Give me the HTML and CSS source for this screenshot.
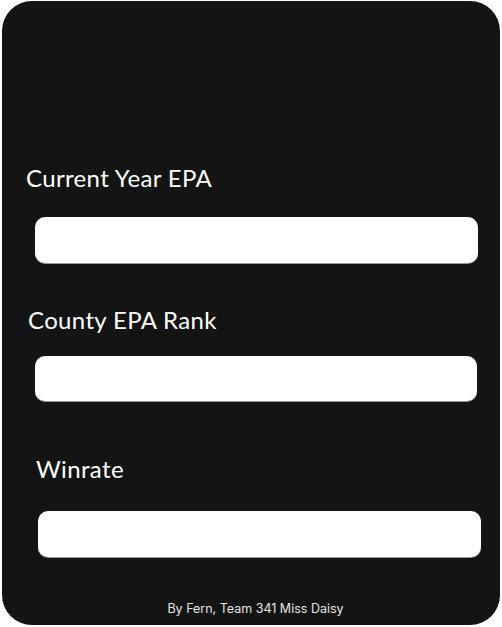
FILE: index.html
```html
<!DOCTYPE html>
<html>
<head>
<meta charset="utf-8">
<link rel="stylesheet" href="styles.css">
</head>
<body>
<div class="card">
  <label class="label label-1" for="epa">Current Year EPA</label>
  <input class="field field-1" id="epa" type="text">
  <label class="label label-2" for="rank">County EPA Rank</label>
  <input class="field field-2" id="rank" type="text">
  <label class="label label-3" for="winrate">Winrate</label>
  <input class="field field-3" id="winrate" type="text">
  <div class="footer">By Fern, Team 341 Miss Daisy</div>
</div>
</body>
</html>
```
FILE: styles.css
```css
html, body {
  margin: 0;
  padding: 0;
  background: #ffffff;
}
.card {
  box-sizing: border-box;
  margin: 1px 0 0 2px;
  width: 498px;
  height: 624px;
  background: #141414;
  border-radius: 30px;
  display: flex;
  flex-direction: column;
  align-items: flex-start;
  padding-top: 162px;
}
.label {
  display: block;
  font-family: Lato, "Liberation Sans", sans-serif;
  font-size: 24px;
  line-height: 30px;
  letter-spacing: 0.35px;
  color: #ffffff;
}
.label-1 { margin-left: 24px; }
.label-2 { margin-left: 26px; margin-top: 42px; }
.label-3 { margin-left: 34px; margin-top: 53px; }
.field {
  box-sizing: border-box;
  display: block;
  border: none;
  outline: none;
  background: #ffffff;
  border-radius: 10px;
  height: 46px;
  width: 443px;
  box-shadow: 0 1px 0 #9a9a9a;
  padding: 0;
}
.field-1 { margin: 24px 0 0 33px; }
.field-2 { margin: 21px 0 0 33px; height: 45px; width: 442px; }
.field-3 { margin: 27px 0 0 36px; }
.footer {
  align-self: stretch;
  margin-top: 44px;
  padding-left: 9px;
  text-align: center;
  font-family: Inter, "Liberation Sans", sans-serif;
  font-size: 12.5px;
  line-height: 16px;
  color: #e6e6e6;
}
```
